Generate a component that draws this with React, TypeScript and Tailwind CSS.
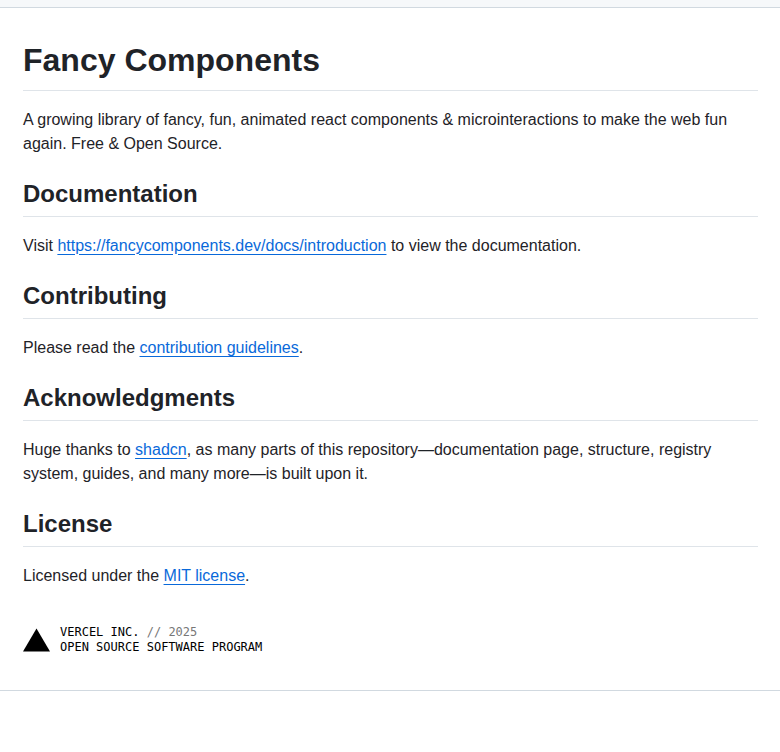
const sans = "font-['Liberation_Sans',Arial,sans-serif]";

function DocLink({ children }: { children: React.ReactNode }) {
  return (
    <a href="#" className="text-[#0969da] underline underline-offset-[3.2px]">
      {children}
    </a>
  );
}

function Heading({ children }: { children: React.ReactNode }) {
  return (
    <h2 className="mt-[23px] mb-4 border-b border-[#d1d9e0b3] pb-[7.2px] text-2xl leading-[30px] font-semibold">
      {children}
    </h2>
  );
}

function Para({ children }: { children: React.ReactNode }) {
  return <p className="pt-px">{children}</p>;
}

function VercelBadge() {
  return (
    <div className="mt-[37px] flex items-center gap-[10px]">
      <svg width="27" height="24" viewBox="0 0 27 24" className="shrink-0">
        <path d="M13.5 0.5L27 23.5H0Z" fill="#000" />
      </svg>
      <div className="font-['DejaVu_Sans_Mono',monospace] text-xs leading-[14.5px] font-normal text-black">
        <div>
          VERCEL INC. <span className="text-[#777]">// 2025</span>
        </div>
        <div>OPEN SOURCE SOFTWARE PROGRAM</div>
      </div>
    </div>
  );
}

export default function App() {
  return (
    <div className={`min-h-[752px] bg-white ${sans} text-base leading-6 text-[#1f2328]`}>
      <div className="h-2 border-b border-[#d1d9e0] bg-[#f6f8fa]" />
      <article className="border-b border-[#d1d9e0] pt-8 pr-[22px] pb-9 pl-[23px]">
        <h1 className="mb-4 border-b border-[#d1d9e0b3] pb-[9.6px] text-[32px] leading-10 font-semibold">Fancy Components</h1>
        <Para>
          A growing library of fancy, fun, animated react components &amp; microinteractions to make the web fun again. Free &amp; Open Source.
        </Para>

        <Heading>Documentation</Heading>
        <Para>
          Visit <DocLink>https://fancycomponents.dev/docs/introduction</DocLink> to view the documentation.
        </Para>

        <Heading>Contributing</Heading>
        <Para>
          Please read the <DocLink>contribution guidelines</DocLink>.
        </Para>

        <Heading>Acknowledgments</Heading>
        <Para>
          Huge thanks to <DocLink>shadcn</DocLink>, as many parts of this repository—documentation page, structure, registry system, guides, and many more—is built upon it.
        </Para>

        <Heading>License</Heading>
        <Para>
          Licensed under the <DocLink>MIT license</DocLink>.
        </Para>

        <VercelBadge />
      </article>
    </div>
  );
}
